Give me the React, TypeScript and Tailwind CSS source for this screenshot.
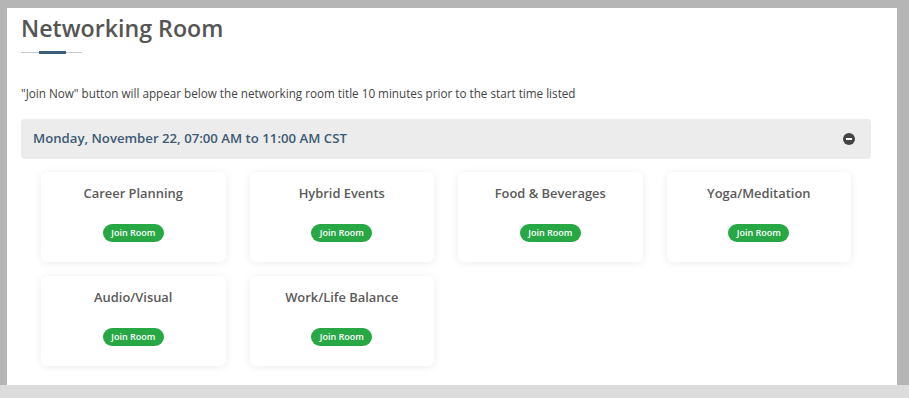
const rooms = [
  "Career Planning",
  "Hybrid Events",
  "Food & Beverages",
  "Yoga/Meditation",
  "Audio/Visual",
  "Work/Life Balance",
];

function MinusCircle() {
  return (
    <svg width="12" height="12" viewBox="0 0 12 12">
      <circle cx="6" cy="6" r="6" fill="#444" />
      <rect x="3" y="5" width="6" height="2" fill="#fff" />
    </svg>
  );
}

export default function App() {
  return (
    <div
      className="flex h-[398px] w-[909px] flex-col overflow-hidden bg-[#b5b5b5]"
      style={{ fontFamily: '"Open Sans", "Noto Sans", sans-serif' }}
    >
      <div className="ml-[7px] mt-[8px] h-[377px] w-[890px] bg-white pl-[14px] pr-[26px]">
        <h1 className="mt-[5px] text-[23.2px] font-semibold leading-[30px] text-[#555]">
          Networking Room
        </h1>
        <div className="relative mt-[8px] h-[3px] w-[61px]">
          <div className="absolute left-0 top-[1px] h-px w-full bg-[#c8c8c8]" />
          <div className="absolute left-[18px] top-0 h-[3px] w-[27px] bg-[#3a5f7d]" />
        </div>
        <p className="mt-[31px] text-[11.7px] leading-[16px] text-[#444]">
          "Join Now" button will appear below the networking room title 10 minutes prior to the
          start time listed
        </p>
        <div className="mt-[18px] flex h-[40px] items-center justify-between rounded bg-[#ececec] pl-[12px] pr-[16px]">
          <span className="text-[13.2px] font-semibold text-[#3d5a73]">
            Monday, November 22, 07:00 AM to 11:00 AM CST
          </span>
          <MinusCircle />
        </div>
        <div className="mt-[13px] grid grid-cols-[184.5px_184.5px_184.5px_184.5px] gap-x-[24px] gap-y-[14px] pl-[20px]">
          {rooms.map((room) => (
            <div
              key={room}
              className="flex h-[90px] flex-col items-center rounded-md bg-white shadow-[0_1px_8px_rgba(0,0,0,0.08)]"
            >
              <p className="mt-[12px] text-[12.9px] font-semibold leading-[18px] text-[#5a5a5a]">
                {room}
              </p>
              <button className="mt-[22px] h-[18px] w-[61px] rounded-full bg-[#28a745] text-[9px] font-semibold text-white">
                Join Room
              </button>
            </div>
          ))}
        </div>
      </div>
      <div className="mt-auto h-[13px] w-full bg-[#dcdcdc]" />
    </div>
  );
}
